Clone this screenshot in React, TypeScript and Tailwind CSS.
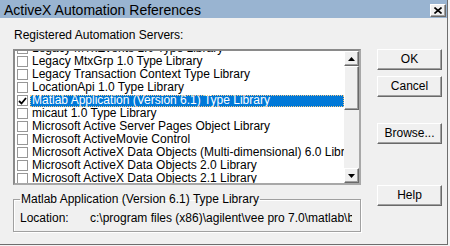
import React from 'react';

const rows = [
  'Legacy MTxEvents 1.0 Type Library',
  'Legacy MtxGrp 1.0 Type Library',
  'Legacy Transaction Context Type Library',
  'LocationApi 1.0 Type Library',
  'Matlab Application (Version 6.1) Type Library',
  'micaut 1.0 Type Library',
  'Microsoft Active Server Pages Object Library',
  'Microsoft ActiveMovie Control',
  'Microsoft ActiveX Data Objects (Multi-dimensional) 6.0 Library',
  'Microsoft ActiveX Data Objects 2.0 Library',
  'Microsoft ActiveX Data Objects 2.1 Library',
  'Microsoft ActiveX Data Objects 2.5 Library',
];

const raised =
  'bg-[#f0f0f0] border border-t-white border-l-white border-r-[#696969] border-b-[#696969] shadow-[inset_-1px_-1px_0_#a0a0a0]';

const Arrow: React.FC<{ down?: boolean }> = ({ down }) => (
  <svg width="7" height="4" viewBox="0 0 7 4">
    <path d={down ? 'M0 0H7L3.5 4Z' : 'M0 4H7L3.5 0Z'} fill="#000" />
  </svg>
);

const WinButton: React.FC<{ label: string; className?: string }> = ({ label, className }) => (
  <button className={`${raised} w-[65px] h-[21px] flex items-center justify-center text-[12px] leading-[13px] text-black ${className ?? ''}`}>
    {label}
  </button>
);

const App: React.FC = () => {
  return (
    <div className="w-[450px] h-[246px] bg-[#f4f4f4] overflow-hidden text-black font-['Liberation_Sans',Arial,sans-serif]">
      <div className="w-[448px] h-[245px] bg-[#f0f0f0] border-r border-b border-[#6e6e6e] flex flex-col">
        {/* title bar */}
        <div className="h-[18px] bg-[#99b4d1] flex items-start shrink-0">
          <span className="pl-[4px] pt-[2px] text-[14px] leading-[16px]">ActiveX Automation References</span>
          <div className={`${raised} ml-auto mr-[1px] mt-[4px] w-[16px] h-[13px] flex items-center justify-center`}>
            <svg width="8" height="7" viewBox="0 0 8 7">
              <path d="M0.5 0.5L7.5 6.5M7.5 0.5L0.5 6.5" stroke="#000" strokeWidth="1.6" />
            </svg>
          </div>
        </div>

        <div className="flex flex-1">
          {/* left column */}
          <div className="w-[348px] ml-[13px] pt-[11px] flex flex-col">
            <div className="text-[12px] leading-[13px] pl-[1px]">Registered Automation Servers:</div>

            <div className="mt-[7px] h-[136px] bg-white border-2 border-t-[#8a8a8a] border-l-[#8a8a8a] border-r-[#a8a8a8] border-b-[#a8a8a8] flex">
              <div className="flex-1 overflow-hidden">
                <div className="-mt-[9px]">
                  {rows.map((r, i) => {
                    const sel = i === 4;
                    return (
                      <div key={i} className="h-[13px] flex items-center whitespace-nowrap">
                        <div className="ml-[2px] w-[11px] h-[11px] bg-white border border-[#979797] flex items-center justify-center shrink-0">
                          {sel && (
                            <svg width="9" height="8" viewBox="0 0 9 8">
                              <path d="M1 4L3.5 6.5L8 1" stroke="#000" strokeWidth="1.8" fill="none" />
                            </svg>
                          )}
                        </div>
                        <div
                          className={`ml-[2px] flex-1 h-[12px] flex items-center px-[2px] text-[12px] leading-[13px] ${
                            sel ? 'bg-[#0078d7] text-white outline outline-1 outline-dotted outline-[#f3c98a] -outline-offset-1' : ''
                          }`}
                        >
                          {r}
                        </div>
                      </div>
                    );
                  })}
                </div>
              </div>
              {/* scrollbar */}
              <div className="w-[15px] bg-[#f0f0f0] flex flex-col shrink-0">
                <div className={`${raised} h-[15px] flex items-center justify-center`}>
                  <Arrow />
                </div>
                <div className={`${raised} h-[44px]`} />
                <div className="flex-1" />
                <div className={`${raised} h-[15px] flex items-center justify-center`}>
                  <Arrow down />
                </div>
              </div>
            </div>

            <fieldset className="mt-[8px] w-[348px] min-w-0 border border-[#a0a0a0] shadow-[inset_1px_1px_0_#fff,1px_1px_0_#fff] px-[6px] pb-[6px]">
              <legend className="px-[1px] text-[12px] leading-[13px]">
                Matlab Application (Version 6.1) Type Library
              </legend>
              <div className="mt-[6px] w-[332px] flex text-[12px] leading-[13px] whitespace-nowrap overflow-hidden">
                <span className="w-[70px] shrink-0">Location:</span>
                <span>c:\program files (x86)\agilent\vee pro 7.0\matlab\bin\win32</span>
              </div>
            </fieldset>
          </div>

          {/* right column */}
          <div className="ml-[16px] pt-[31px] flex flex-col">
            <WinButton label="OK" />
            <WinButton label="Cancel" className="mt-[6px]" />
            <WinButton label="Browse..." className="mt-[26px]" />
            <WinButton label="Help" className="mt-[41px]" />
          </div>
        </div>
      </div>
    </div>
  );
};

export default App;
